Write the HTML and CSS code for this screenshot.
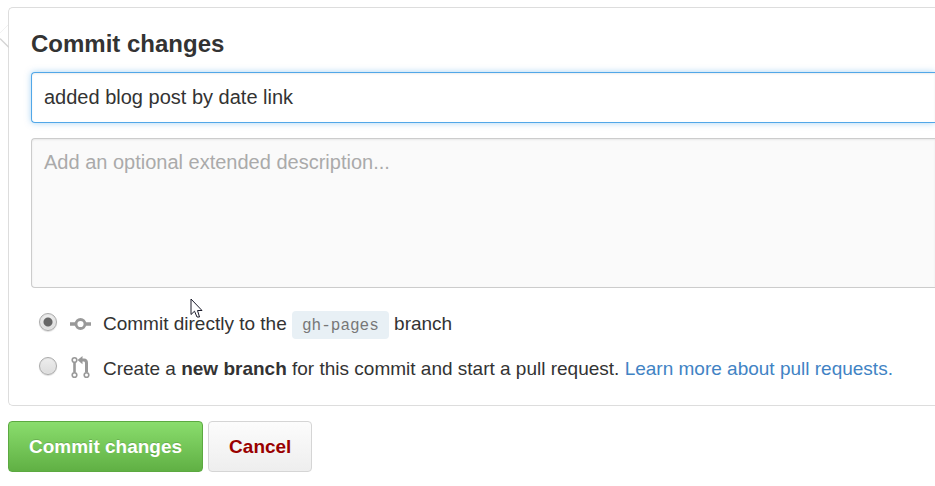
FILE: index.html
```html
<!DOCTYPE html>
<html lang="en">
<head>
<meta charset="utf-8">
<title>Commit changes</title>
<link rel="stylesheet" href="styles.css">
</head>
<body>
<form class="commit-form">
  <section class="panel">
    <svg class="panel-caret" width="9" height="24" viewBox="0 0 9 24" aria-hidden="true"><path d="M8 0L0 8" stroke="#f2f2f2" fill="none"/><path d="M0 13.500L9 22.500" stroke="#d4d4d4" stroke-width="1.300" fill="none"/></svg>
    <h1 class="title">Commit changes</h1>
    <input class="field summary" type="text" value="added blog post by date link" aria-label="Commit summary">
    <textarea class="field description" placeholder="Add an optional extended description..." aria-label="Extended description"></textarea>
    <div class="choices">
      <div class="choice">
        <input class="radio" type="radio" name="target" id="direct" checked>
        <svg class="icon" width="22" height="24" viewBox="0 0 22 24" aria-hidden="true"><path d="M0 12H6M15 12H21" stroke="#999" stroke-width="3.400" fill="none"/><circle cx="10.500" cy="12" r="4.500" stroke="#999" stroke-width="2.800" fill="none"/></svg>
        <label for="direct">Commit directly to the <code class="branch">gh-pages</code> branch</label>
      </div>
      <div class="choice">
        <input class="radio" type="radio" name="target" id="pull">
        <svg class="icon" width="22" height="24" viewBox="0 0 22 24" aria-hidden="true"><g stroke="#999" fill="none"><circle cx="4.500" cy="4" r="2.300" stroke-width="1.600"/><circle cx="4.500" cy="19" r="2.300" stroke-width="1.600"/><circle cx="16.500" cy="19" r="2.300" stroke-width="1.600"/><path d="M4.500 6.500V16.500" stroke-width="2.600"/><path d="M11.500 4H14Q16.500 4 16.500 7V16.500" stroke-width="3"/></g><path d="M7.500 4L12.500 0V8.200Z" fill="#999"/></svg>
        <label for="pull">Create a <strong>new branch</strong> for this commit and start a pull request. <a class="link" href="#">Learn more about pull requests.</a></label>
      </div>
    </div>
  </section>
  <div class="actions">
    <button class="button primary" type="submit">Commit changes</button>
    <button class="button cancel" type="button">Cancel</button>
  </div>
</form>
<svg class="cursor" width="13" height="20" viewBox="0 0 13 20" aria-hidden="true"><path d="M1 1V16.500L4.500 13.200L7 19H9.500L7.500 12.500H12Z" fill="#fff" stroke="#1c1c2b"/></svg>
</body>
</html>
```
FILE: styles.css
```css
* {
  box-sizing: border-box;
}

body {
  margin: 0;
  overflow: hidden;
  background: #fff;
  color: #333;
  font: 20px/27px "Liberation Sans", Arial, sans-serif;
}

.commit-form {
  padding: 7px 0 0 8px;
}

.panel {
  position: relative;
  padding: 22px 0 23px 22px;
  border: 1px solid #ddd;
  border-right: 0;
  border-radius: 5px 0 0 5px;
}

.panel-caret {
  position: absolute;
  top: 17px;
  left: -9px;
}

.title {
  margin: 0 0 14px;
  font-size: 24px;
  line-height: 28px;
}

.field {
  display: block;
  width: 100%;
  border: 1px solid #ccc;
  border-right: 0;
  border-radius: 4px 0 0 4px;
  outline: none;
  color: #333;
  font: inherit;
}

.summary {
  padding: 11px 12px;
  border-color: #51a7e8;
  background: #fff;
  box-shadow: inset 0 1px 2px rgba(0, 0, 0, .075), 0 0 6px rgba(81, 167, 232, .5);
}

.description {
  height: 150px;
  margin-top: 15px;
  padding: 10px 12px;
  resize: none;
  background: #fafafa;
  box-shadow: inset 0 1px 2px rgba(0, 0, 0, .075);
}

.description::placeholder {
  color: #aaa;
}

.choices {
  display: grid;
  gap: 16px;
  margin-top: 22px;
  padding-left: 8px;
  font-size: 19px;
}

.choice {
  display: flex;
  align-items: center;
  height: 28px;
  white-space: nowrap;
}

.radio {
  flex: none;
  appearance: none;
  width: 18px;
  height: 18px;
  margin: 0 13px 4px 0;
  border: 1px solid #aaa;
  border-radius: 50%;
  background: linear-gradient(#eee, #dcdcdc);
  box-shadow: inset 0 0 0 1px #e4e4e4, 0 1px 1px #ddd;
}

.radio:checked {
  background: radial-gradient(circle, #666 0 4px, transparent 5px), linear-gradient(#eee, #dcdcdc);
}

.icon {
  flex: none;
  margin-right: 11px;
}

.branch {
  display: inline-block;
  padding: 2px 10px 0;
  border-radius: 4px;
  background: #e8f0f5;
  color: #777;
  font: 16px/26px "Liberation Mono", monospace;
}

.link {
  color: #4183c4;
  text-decoration: none;
}

.actions {
  display: flex;
  gap: 5px;
  margin-top: 15px;
}

.button {
  padding: 11px 20px;
  border: 1px solid #d5d5d5;
  border-radius: 4px;
  font: bold 19px/27px "Liberation Sans", Arial, sans-serif;
}

.primary {
  border-color: #5ca941;
  background: linear-gradient(#8add6d, #60b044);
  color: #fff;
  text-shadow: 0 -1px 0 rgba(0, 0, 0, .15);
}

.cancel {
  background: linear-gradient(#fcfcfc, #eee);
  color: #900;
}

.cursor {
  position: absolute;
  top: 298px;
  left: 190px;
}
```
